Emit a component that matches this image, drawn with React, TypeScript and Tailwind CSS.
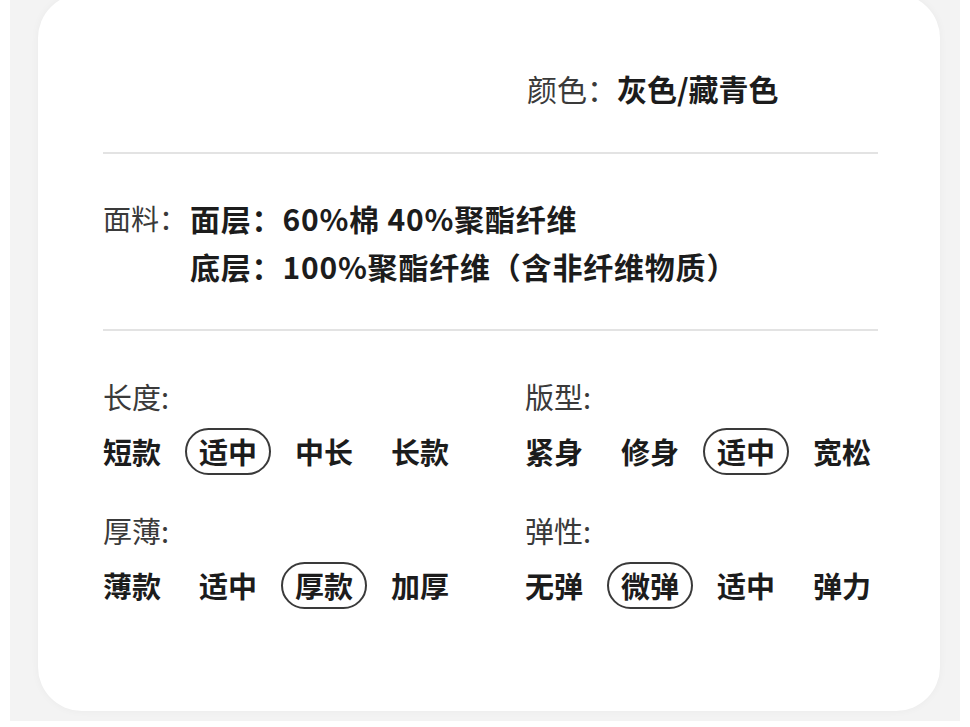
import React from "react";

const font = { fontFamily: '"Noto Sans CJK SC", "Noto Sans", sans-serif' };

type Attr = { label: string; options: string[]; selected: number };

const left: Attr[] = [
  { label: "长度:", options: ["短款", "适中", "中长", "长款"], selected: 1 },
  { label: "厚薄:", options: ["薄款", "适中", "厚款", "加厚"], selected: 2 },
];

const right: Attr[] = [
  { label: "版型:", options: ["紧身", "修身", "适中", "宽松"], selected: 2 },
  { label: "弹性:", options: ["无弹", "微弹", "适中", "弹力"], selected: 1 },
];

const AttrBlock = ({ attr, first }: { attr: Attr; first: boolean }) => (
  <div className={first ? "" : "mt-[35px]"}>
    <div className="text-[29px] leading-[40px] text-[#3a3a3a]">{attr.label}</div>
    <div className="mt-[12px] grid h-[47px] grid-cols-[repeat(4,96px)] items-center">
      {attr.options.map((opt, i) =>
        i === attr.selected ? (
          <div key={opt} className="-ml-[14px] flex h-[47px] w-fit items-center rounded-full border-2 border-[#3a3a3a] px-[12px]">
            <span className="text-[29px] font-bold leading-none text-[#1c1c1c]">{opt}</span>
          </div>
        ) : (
          <span key={opt} className="text-[29px] font-bold leading-none text-[#1c1c1c]">
            {opt}
          </span>
        )
      )}
    </div>
  </div>
);

export default function App() {
  return (
    <div className="h-[727px] w-[970px] overflow-hidden bg-white" style={font}>
      <div className="ml-[10px] h-full w-[950px] bg-[#f3f3f3] pl-[28px] pr-[20px]">
        <div className="-mt-[6px] h-[717px] rounded-[44px] bg-white pl-[65px] pr-[62px] pt-[74px] shadow-[0_0_8px_rgba(0,0,0,0.04)]">
          <div className="grid grid-cols-[424px_1fr]">
            <div />
            <div className="text-[30px] leading-[40px] text-[#3a3a3a]">
              颜色：<span className="font-bold text-[#1c1c1c]">灰色/藏青色</span>
            </div>
          </div>

          <div className="mt-[44px] h-[2px] bg-[#e3e3e3]" />

          <div className="mt-[40px] flex text-[30px] leading-[48px]">
            <span className="w-[87px] shrink-0 whitespace-nowrap text-[28px] text-[#3a3a3a]">面料：</span>
            <div className="whitespace-nowrap font-bold tracking-[0.8px] text-[#1c1c1c]">
              <div>面层：60%棉 40%聚酯纤维</div>
              <div>底层：100%聚酯纤维（含非纤维物质）</div>
            </div>
          </div>

          <div className="mt-[39px] h-[2px] bg-[#e3e3e3]" />

          <div className="mt-[45px] grid grid-cols-[422px_1fr]">
            <div>
              {left.map((a, i) => (
                <AttrBlock key={a.label} attr={a} first={i === 0} />
              ))}
            </div>
            <div>
              {right.map((a, i) => (
                <AttrBlock key={a.label} attr={a} first={i === 0} />
              ))}
            </div>
          </div>
        </div>
      </div>
    </div>
  );
}
